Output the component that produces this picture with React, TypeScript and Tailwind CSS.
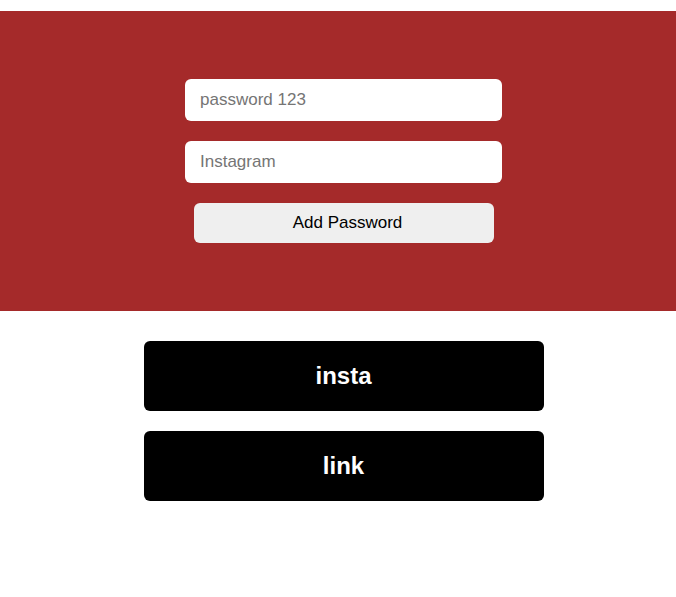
import { useState } from 'react'

interface Entry {
  site: string
  password: string
}

export default function App() {
  const [password, setPassword] = useState('')
  const [site, setSite] = useState('')
  const [entries, setEntries] = useState<Entry[]>([
    { site: 'insta', password: '' },
    { site: 'link', password: '' },
  ])

  const addPassword = () => {
    if (!site) return
    setEntries([...entries, { site, password }])
    setPassword('')
    setSite('')
  }

  return (
    <div className="min-h-[597px] bg-white pt-[11px] font-['Liberation_Sans',Arial,sans-serif]">
      <div className="flex h-[300px] flex-col items-center justify-center gap-5 bg-[#a52a2a] pl-[11px]">
        <input
          value={password}
          onChange={(e) => setPassword(e.target.value)}
          placeholder="password 123"
          className="h-[42px] w-[317px] rounded-md bg-white px-[15px] text-[17px] text-black outline-none placeholder:text-[#757575]"
        />
        <input
          value={site}
          onChange={(e) => setSite(e.target.value)}
          placeholder="Instagram"
          className="h-[42px] w-[317px] rounded-md bg-white px-[15px] text-[17px] text-black outline-none placeholder:text-[#757575]"
        />
        <button
          onClick={addPassword}
          className="h-10 w-[300px] rounded-md bg-[#efefef] pl-2 text-[17px] text-black"
        >
          Add Password
        </button>
      </div>

      <div className="mt-[30px] flex flex-col items-center gap-5 pl-[11px]">
        {entries.map((entry, i) => (
          <div
            key={i}
            className="flex h-[70px] w-[400px] items-center justify-center rounded-md bg-black text-2xl font-bold text-white"
          >
            {entry.site}
          </div>
        ))}
      </div>
    </div>
  )
}
